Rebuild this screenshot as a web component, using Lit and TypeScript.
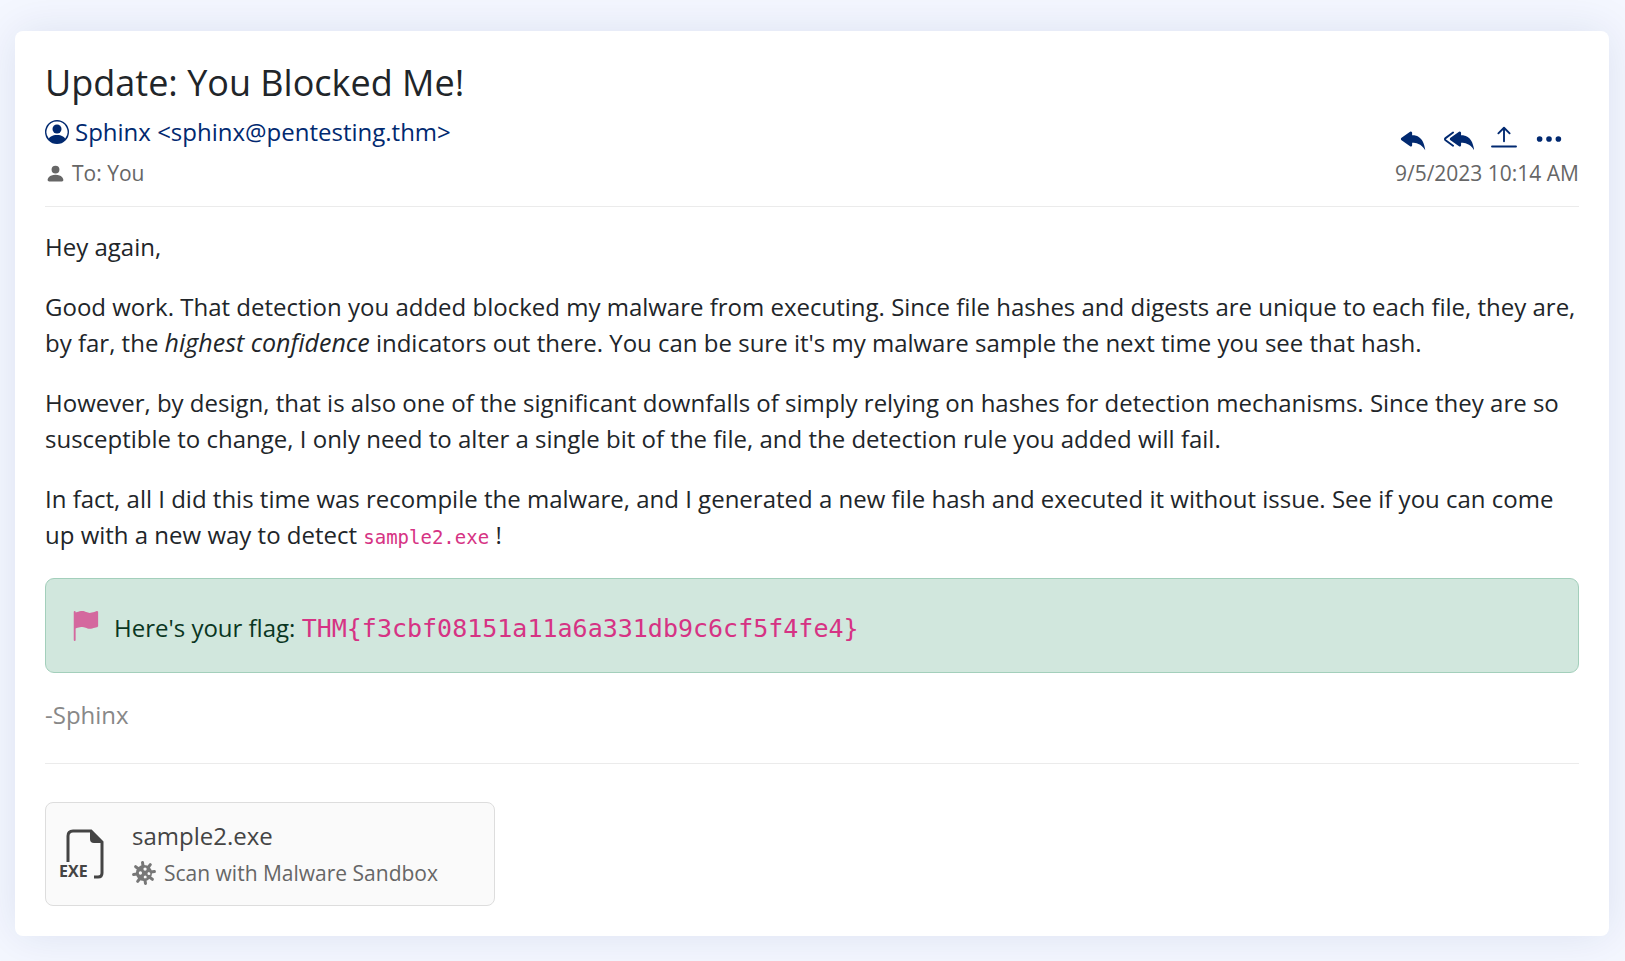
import { LitElement, html, css, svg } from "lit";
import { customElement } from "lit/decorators.js";

const personCircle = svg`<path d="M11 6a3 3 0 1 1-6 0 3 3 0 0 1 6 0z"/><path fill-rule="evenodd" d="M0 8a8 8 0 1 1 16 0A8 8 0 0 1 0 8zm8-7a7 7 0 0 0-5.468 11.370C3.242 11.226 4.805 10 8 10s4.757 1.225 5.468 2.370A7 7 0 0 0 8 1z"/>`;
const person = svg`<path d="M3 14s-1 0-1-1 1-4 6-4 6 3 6 4-1 1-1 1H3zm5-6a3 3 0 1 0 0-6 3 3 0 0 0 0 6z"/>`;
const reply = svg`<path d="M5.921 11.900 1.353 8.620a.719.719 0 0 1 0-1.238L5.921 4.100A.716.716 0 0 1 7 4.719V6c1.500 0 6 0 7 8-2.500-4.500-7-4-7-4v1.281c0 .560-.606.898-1.079.620z"/>`;
const replyAll = svg`<path d="M8.021 11.900 3.453 8.620a.719.719 0 0 1 0-1.238L8.021 4.100a.716.716 0 0 1 1.079.619V6c1.500 0 6 0 7 8-2.500-4.500-7-4-7-4v1.281c0 .560-.606.898-1.079.620z"/><path d="M5.232 4.293a.5.5 0 0 1-.106.700L1.114 7.945a.5.5 0 0 1-.042.028.147.147 0 0 0 0 .252.503.503 0 0 1 .042.028l4.012 2.954a.5.5 0 1 1-.593.805L.539 9.073a1.147 1.147 0 0 1 0-1.946l3.994-2.940a.5.5 0 0 1 .699.106z"/>`;
const upload = svg`<path d="M8 9.200V2M5 5l3-3 3 3M1.600 12h12.800" fill="none" stroke="currentColor" stroke-linecap="round" stroke-linejoin="round"/>`;
const dots = svg`<path d="M3 9.500a1.500 1.500 0 1 1 0-3 1.500 1.500 0 0 1 0 3zm5 0a1.500 1.500 0 1 1 0-3 1.500 1.500 0 0 1 0 3zm5 0a1.500 1.500 0 1 1 0-3 1.500 1.500 0 0 1 0 3z"/>`;
const flag = svg`<path d="M14.778.085A.5.5 0 0 1 15 .5V8a.5.5 0 0 1-.314.464L14.500 8l.186.464-.003.001-.006.003-.023.009a12.435 12.435 0 0 1-.397.150c-.264.095-.631.223-1.047.350-.816.252-1.879.523-2.710.523-.847 0-1.548-.280-2.158-.525l-.028-.010C7.680 8.710 7.140 8.500 6.500 8.500c-.700 0-1.638.230-2.437.477A19.626 19.626 0 0 0 3 9.342V15.500a.5.5 0 0 1-1 0V.5a.5.5 0 0 1 1 0v.282c.226-.079.496-.170.790-.260C4.606.272 5.670 0 6.500 0c.840 0 1.524.277 2.121.519l.043.018C9.286.788 9.828 1 10.500 1c.700 0 1.638-.230 2.437-.477a19.587 19.587 0 0 0 1.349-.476l.019-.007.004-.002h.001"/>`;
const virus = svg`<g stroke="currentColor" stroke-width="2" stroke-linecap="round">${[-8, 37, 82, 127, 172, 217, 262, 307].map(
  (a) => svg`<path transform="rotate(${a} 8 8)" d="M8 3.200V1"/>`
)}</g><path fill-rule="evenodd" d="M8 2.600a5.400 5.400 0 1 0 0 10.800 5.400 5.400 0 0 0 0-10.800zM8.700 4.300a1.100 1.100 0 1 1 0 2.200 1.100 1.100 0 0 1 0-2.200zM11.300 7.300a1 1 0 1 1 0 2 1 1 0 0 1 0-2zM5.600 6.900a1.100 1.100 0 1 1 0 2.200 1.100 1.100 0 0 1 0-2.200zM8.800 9.600a1 1 0 1 1 0 2 1 1 0 0 1 0-2z"/>`;

const icon = (body: unknown, name = "", box = "0 0 16 16") =>
  html`<svg class="icon ${name}" viewBox=${box} fill="currentColor" aria-hidden="true">${body}</svg>`;

@customElement("app-root")
export class AppRoot extends LitElement {
  static styles = css`
    * { box-sizing: border-box; }
    :host {
      display: block;
      box-sizing: border-box;
      min-height: 100vh;
      padding: 31px 16px 24px 15px;
      background: #f4f7ff;
      color: #212529;
      font: 24px/36px "Open Sans", "Noto Sans", sans-serif;
      overflow: hidden;
    }
    .card {
      padding: 30px;
      background: #fff;
      border-radius: 8px;
      box-shadow: 0 0 45px rgba(1, 41, 112, 0.1);
    }
    .icon { width: 24px; height: 24px; flex: none; display: block; }
    h1 { margin: 0; font-size: 36px; line-height: 44px; font-weight: 400; }
    header {
      display: flex;
      justify-content: space-between;
      align-items: flex-end;
      padding-bottom: 15px;
      border-bottom: 1px solid #ebebeb;
    }
    .sender, .recipient { display: flex; align-items: center; gap: 6px; }
    .sender { color: #012970; text-decoration: none; margin: 9px 0 5px; }
    .recipient, .date { color: #666; font-size: 21px; line-height: 36px; }
    .person { width: 21px; height: 21px; }
    .meta { display: flex; flex-direction: column; align-items: flex-end; }
    .actions { display: flex; gap: 15px; padding-right: 15px; margin-bottom: 1px; }
    button { font: inherit; color: inherit; cursor: pointer; text-align: left; }
    .action { padding: 0; border: 0; background: none; color: #012970; }
    .action .icon { width: 30px; height: 30px; }
    .message { padding: 22px 0 30px; border-bottom: 1px solid #ebebeb; }
    p { margin: 0 0 24px; }
    em { font-size: 25px; line-height: 24px; }
    code {
      font-family: "DejaVu Sans Mono", monospace;
      font-size: 19px;
      line-height: 24px;
      color: #d63384;
    }
    .alert {
      display: flex;
      align-items: center;
      gap: 14px;
      padding: 24px;
      margin: 25px 0 24px;
      min-height: 95px;
      color: #0a3622;
      background: #d1e7dd;
      border: 1px solid #a3cfbb;
      border-radius: 9px;
    }
    .alert code { font-size: 25px; }
    .flag { width: 30px; height: 30px; color: #d63384; opacity: 0.7; }
    .alert span { padding-top: 4px; }
    .message .signature { margin: 0; color: #888; }
    .attachment {
      display: flex;
      align-items: center;
      gap: 27px;
      width: 450px;
      max-width: 100%;
      height: 104px;
      margin-top: 38px;
      padding: 0 14px;
      color: #444;
      background: #fafafa;
      border: 1px solid #ddd;
      border-radius: 8px;
    }
    .file { width: 45px; height: 50px; overflow: visible; }
    .scan { display: flex; align-items: center; gap: 8px; margin-top: 1px; color: #666; font-size: 21px; }
    .virus { color: #777; }
  `;

  render() {
    return html`
      <main class="card">
        <h1>Update: You Blocked Me!</h1>
        <header>
          <div>
            <a class="sender" href="mailto:sphinx@pentesting.thm">${icon(personCircle)}Sphinx &lt;sphinx@pentesting.thm&gt;</a>
            <div class="recipient">${icon(person, "person")}To: You</div>
          </div>
          <div class="meta">
            <div class="actions">
              <button class="action" aria-label="Reply">${icon(reply)}</button>
              <button class="action" aria-label="Reply all">${icon(replyAll)}</button>
              <button class="action" aria-label="Forward">${icon(upload)}</button>
              <button class="action" aria-label="More">${icon(dots)}</button>
            </div>
            <time class="date" datetime="2023-09-05T10:14">9/5/2023 10:14 AM</time>
          </div>
        </header>
        <article class="message">
          <p>Hey again,</p>
          <p>Good work. That detection you added blocked my malware from executing. Since file hashes and digests are unique to each file, they are, by far, the <em>highest confidence</em> indicators out there. You can be sure it's my malware sample the next time you see that hash.</p>
          <p>However, by design, that is also one of the significant downfalls of simply relying on hashes for detection mechanisms. Since they are so susceptible to change, I only need to alter a single bit of the file, and the detection rule you added will fail.</p>
          <p>In fact, all I did this time was recompile the malware, and I generated a new file hash and executed it without issue. See if you can come up with a new way to detect <code>sample2.exe</code> !</p>
          <div class="alert">${icon(flag, "flag")}<span>Here's your flag: <code>THM{f3cbf08151a11a6a331db9c6cf5f4fe4}</code></span></div>
          <p class="signature">-Sphinx</p>
        </article>
        <button class="attachment">
          ${icon(
            svg`<path d="M8 33V7q0-5 5-5H31L42 13V44q0 4-4 4H34" fill="none" stroke="currentColor" stroke-width="3"/><path d="M30 2 42 14H34q-4 0-4-4z"/><text x="-1" y="48" font-size="16" font-weight="700">EXE</text>`,
            "file",
            "0 0 45 50"
          )}
          <span>
            <span>sample2.exe</span>
            <span class="scan">${icon(virus, "virus")}Scan with Malware Sandbox</span>
          </span>
        </button>
      </main>
    `;
  }
}
